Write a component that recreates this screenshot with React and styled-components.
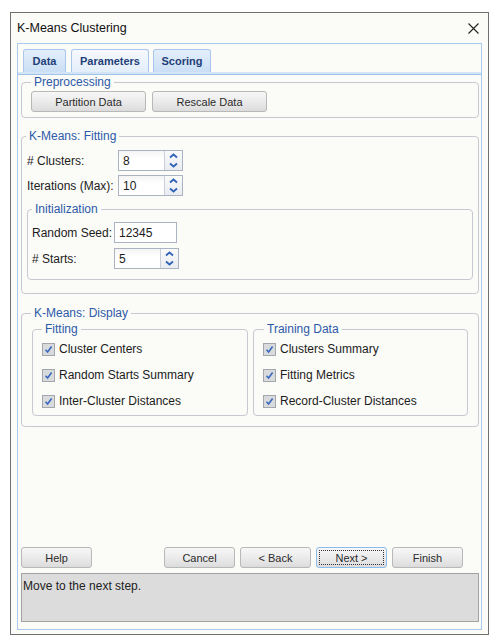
import React from 'react';
import styled, { createGlobalStyle, css } from 'styled-components';

const Global = createGlobalStyle`
 body {
  margin: 0;
  background: #ffffff;
  font-family: "Liberation Sans", Arial, sans-serif;
  font-size: 12px;
  color: #1c1c1c;
 }
`;

/* Window chrome */
const Win = {
 Frame: styled.div`
  margin: 12px 0 0 10px;
  width: 479px;
  height: 623px;
  box-sizing: border-box;
  border: 1px solid #707070;
  background: #fbfbf8;
  display: flex;
  flex-direction: column;
 `,
 TitleBar: styled.div`
  height: 30px;
  display: flex;
  align-items: center;
  justify-content: space-between;
  padding: 0 9px 0 6px;
  font-size: 12.5px;
  color: #111;
 `,
 Panel: styled.div`
  flex: 1;
  margin: 0 6px 4px 6px;
  border: 1px solid #a9c9ee;
  display: flex;
  flex-direction: column;
 `,
};

/* Tabs */
const Tabs = {
 Strip: styled.div`
  display: flex;
  align-items: flex-end;
  gap: 4px;
  padding: 5px 5px 0;
  border-bottom: 1px solid #9fc2ea;
  box-shadow: inset 0 -2px 0 #d3e4f7;
 `,
 Tab: styled.div`
  height: 23px;
  box-sizing: border-box;
  width: ${(p) => p.w}px;
  margin-bottom: 2px;
  display: flex;
  align-items: center;
  justify-content: center;
  border: 1px solid #a9c7ec;
  border-bottom: none;
  border-radius: 3px 3px 0 0;
  background: linear-gradient(#e4eefa, #cadff5);
  font-size: 11px;
  font-weight: bold;
  color: #1f3f78;
  ${(p) =>
   p.active &&
   css`
    background: linear-gradient(#f6f9fd, #e3eefa);
   `}
 `,
};

const Content = styled.div`
 flex: 1;
 display: flex;
 flex-direction: column;
 padding: 0 2px 7px 3px;
`;

/* Group boxes: the fieldset has no side padding so the legend sits at a fixed offset */
const Group = styled.fieldset`
 margin: ${(p) => p.m || '0'};
 padding: 0;
 border: 1px solid #c6c9d1;
 border-radius: 4px;
 min-width: 0;
`;

const GroupBody = styled.div`
 padding: ${(p) => p.pad || '0'};
`;

const Legend = styled.legend`
 margin-left: ${(p) => p.at - 4}px;
 padding: 0 3px;
 font-size: 12px;
 line-height: 14px;
 color: #2d5aa8;
`;

/* Buttons */
const Button = styled.button`
 width: ${(p) => p.w || 71}px;
 height: 21px;
 box-sizing: border-box;
 padding: 0;
 border: 1px solid #b8b8b8;
 border-radius: 3px;
 background: linear-gradient(#f7f7f7 0%, #ebebeb 50%, #dcdcdc 100%);
 font-family: "Liberation Sans", Arial, sans-serif;
 font-size: 11px;
 color: #2b2b2b;
 position: relative;
 ${(p) =>
  p.focused &&
  css`
   border-color: #8cbcec;
   &::after {
    content: '';
    position: absolute;
    inset: 2px;
    border: 1px dotted #333;
   }
  `}
`;

const ButtonRow = styled.div`
 display: flex;
 gap: ${(p) => p.gap || 6}px;
 padding: ${(p) => p.pad || '0'};
`;

const NavButtons = styled(ButtonRow)`
 margin-left: auto;
`;

/* Form rows */
const Form = {
 Row: styled.div`
  display: flex;
  align-items: center;
  height: 21px;
  margin-top: ${(p) => p.mt || 0}px;
 `,
 Label: styled.div`
  width: ${(p) => p.w}px;
  flex: none;
 `,
 Spin: styled.div`
  display: flex;
  height: 21px;
  box-sizing: border-box;
  border: 1px solid #abb3c2;
  background: #fff;
 `,
 Input: styled.div`
  width: ${(p) => p.w}px;
  box-sizing: border-box;
  padding-left: 4px;
  display: flex;
  align-items: center;
  background: linear-gradient(#f4f4f4, #ffffff 40%);
  font-size: 12px;
 `,
 TextBox: styled.div`
  width: ${(p) => p.w}px;
  height: 21px;
  box-sizing: border-box;
  border: 1px solid #abb3c2;
  background: #fff;
  padding-left: 4px;
  display: flex;
  align-items: center;
 `,
 Arrows: styled.div`
  width: 17px;
  border-left: 1px solid #c9cfd9;
  display: flex;
  flex-direction: column;
  background: linear-gradient(#fafafa, #e9ecf1);
 `,
 Arrow: styled.div`
  flex: 1;
  display: flex;
  align-items: center;
  justify-content: center;
 `,
};

/* Checkboxes */
const Check = {
 List: styled.div`
  display: flex;
  flex-direction: column;
  gap: 6px;
 `,
 Row: styled.div`
  display: flex;
  align-items: center;
  gap: 4px;
  height: 20px;
 `,
 Box: styled.div`
  width: 13px;
  height: 13px;
  box-sizing: border-box;
  border: 1px solid #a2a6ad;
  background: #d9dadc;
  display: flex;
  align-items: center;
  justify-content: center;
 `,
};

const DisplayGrid = styled.div`
 display: grid;
 grid-template-columns: 216px 215px;
 gap: 5px;
 margin-left: 10px;
`;

const Spacer = styled.div`
 flex: 1;
`;

const Status = styled.div`
 margin-top: 5px;
 height: 49px;
 box-sizing: border-box;
 border: 1px solid #a3a3a3;
 background: #dcdcdc;
 padding: 5px 1px;
 font-size: 12px;
 color: #222;
`;

function Chevron({ down }) {
 return (
  <svg width="9" height="6" viewBox="0 0 9 6">
   <path
    d={down ? 'M1 1.5 L4.5 4.5 L8 1.5' : 'M1 4.5 L4.5 1.5 L8 4.5'}
    fill="none"
    stroke="#2f62b8"
    strokeWidth="1.8"
   />
  </svg>
 );
}

function SpinBox({ value, w }) {
 return (
  <Form.Spin>
   <Form.Input w={w}>{value}</Form.Input>
   <Form.Arrows>
    <Form.Arrow>
     <Chevron />
    </Form.Arrow>
    <Form.Arrow>
     <Chevron down />
    </Form.Arrow>
   </Form.Arrows>
  </Form.Spin>
 );
}

function CheckItem({ label }) {
 return (
  <Check.Row>
   <Check.Box>
    <svg width="9" height="9" viewBox="0 0 9 9">
     <path d="M1.5 4.8 L3.6 7 L7.6 1.5" fill="none" stroke="#3a69c0" strokeWidth="1.6" />
    </svg>
   </Check.Box>
   {label}
  </Check.Row>
 );
}

export default function App() {
 return (
  <>
   <Global />
   <Win.Frame>
    <Win.TitleBar>
     <span>K-Means Clustering</span>
     <svg width="11" height="11" viewBox="0 0 11 11">
      <path d="M0.5 0.5 L10.5 10.5 M10.5 0.5 L0.5 10.5" stroke="#222" strokeWidth="1.1" />
     </svg>
    </Win.TitleBar>
    <Win.Panel>
     <Tabs.Strip>
      <Tabs.Tab w={43}>Data</Tabs.Tab>
      <Tabs.Tab w={78} active style={{ marginLeft: 1 }}>
       Parameters
      </Tabs.Tab>
      <Tabs.Tab w={58}>Scoring</Tabs.Tab>
     </Tabs.Strip>
     <Content>
      <Group>
       <Legend at={13}>Preprocessing</Legend>
       <GroupBody pad="2px 0 5px 9px">
        <ButtonRow>
         <Button w={115}>Partition Data</Button>
         <Button w={115}>Rescale Data</Button>
        </ButtonRow>
       </GroupBody>
      </Group>

      <Group m="11px 0 0">
       <Legend at={8}>K-Means: Fitting</Legend>
       <GroupBody pad="7px 0 13px 5px">
        <Form.Row>
         <Form.Label w={91}># Clusters:</Form.Label>
         <SpinBox value="8" w={45} />
        </Form.Row>
        <Form.Row mt={4}>
         <Form.Label w={91}>Iterations (Max):</Form.Label>
         <SpinBox value="10" w={45} />
        </Form.Row>
        <Group m="6px 5px 0 0">
         <Legend at={8}>Initialization</Legend>
         <GroupBody pad="6px 0 10px 4px">
          <Form.Row>
           <Form.Label w={82}>Random Seed:</Form.Label>
           <Form.TextBox w={63}>12345</Form.TextBox>
          </Form.Row>
          <Form.Row mt={5}>
           <Form.Label w={82}># Starts:</Form.Label>
           <SpinBox value="5" w={45} />
          </Form.Row>
         </GroupBody>
        </Group>
       </GroupBody>
      </Group>

      <Group m="12px 0 0">
       <Legend at={13}>K-Means: Display</Legend>
       <GroupBody pad="2px 0 10px 0">
        <DisplayGrid>
         <Group>
          <Legend at={13}>Fitting</Legend>
          <GroupBody pad="3px 0 4px 9px">
           <Check.List>
            <CheckItem label="Cluster Centers" />
            <CheckItem label="Random Starts Summary" />
            <CheckItem label="Inter-Cluster Distances" />
           </Check.List>
          </GroupBody>
         </Group>
         <Group>
          <Legend at={14}>Training Data</Legend>
          <GroupBody pad="3px 0 4px 9px">
           <Check.List>
            <CheckItem label="Clusters Summary" />
            <CheckItem label="Fitting Metrics" />
            <CheckItem label="Record-Cluster Distances" />
           </Check.List>
          </GroupBody>
         </Group>
        </DisplayGrid>
       </GroupBody>
      </Group>

      <Spacer />

      <ButtonRow>
       <Button>Help</Button>
       <NavButtons gap={5} pad="0 16px 0 0">
        <Button>Cancel</Button>
        <Button>&lt; Back</Button>
        <Button focused>Next &gt;</Button>
        <Button>Finish</Button>
       </NavButtons>
      </ButtonRow>
      <Status>Move to the next step.</Status>
     </Content>
    </Win.Panel>
   </Win.Frame>
  </>
 );
}
